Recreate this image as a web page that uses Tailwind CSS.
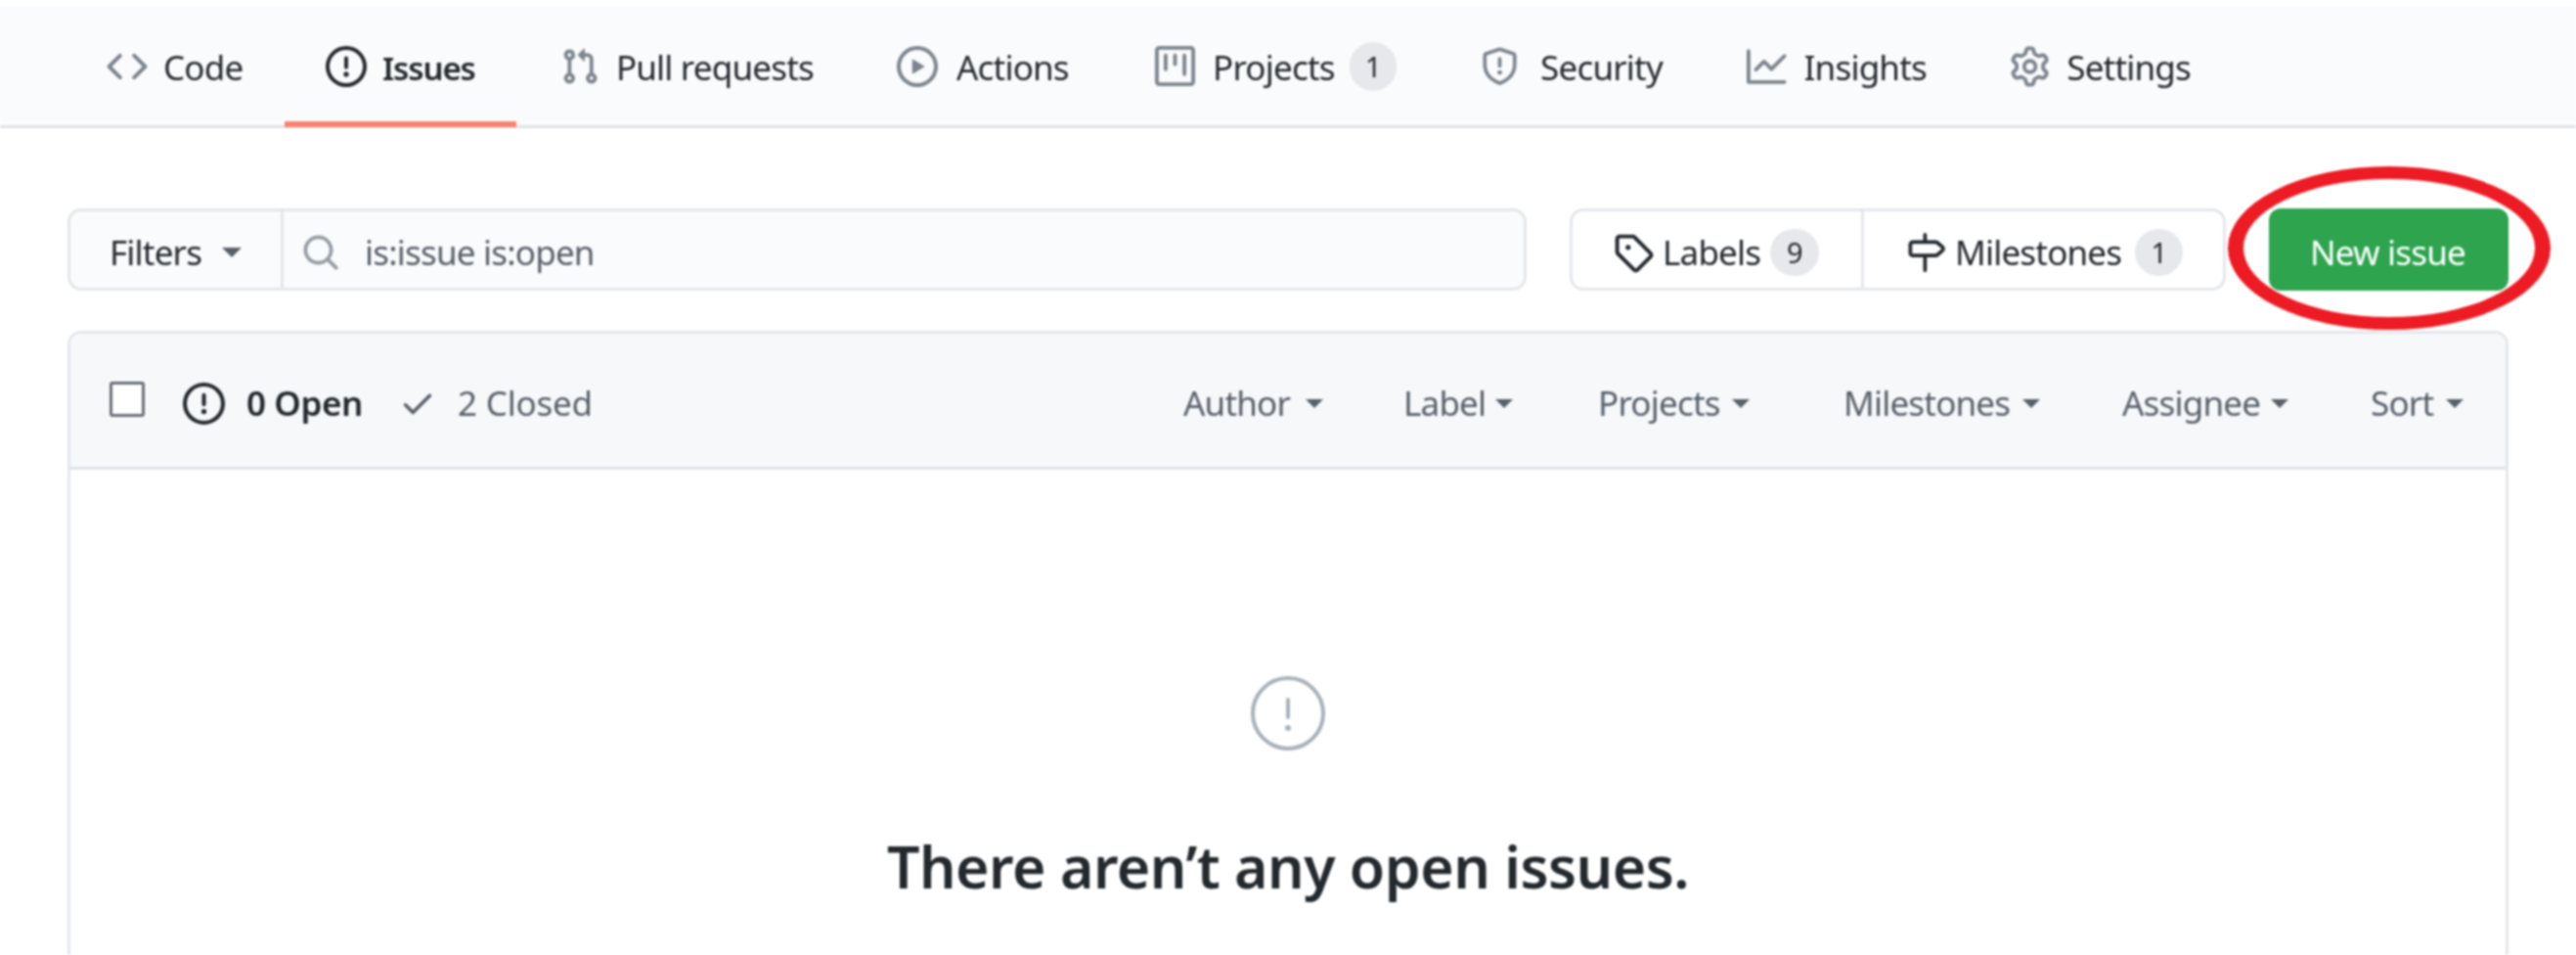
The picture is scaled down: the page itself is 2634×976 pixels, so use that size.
<!DOCTYPE html>
<html lang="en">
<head>
  <meta charset="UTF-8" />
  <title>Issues</title>
  <script src="https://cdn.jsdelivr.net/npm/@tailwindcss/browser@4"></script>
</head>
<body class="bg-white [font-family:'Noto_Sans',sans-serif]">
<div class="relative w-[2634px] h-[976px] overflow-hidden pt-[7px] blur-[1px]">

  <!-- Repo tabs -->
  <nav class="h-[124px] bg-[#fafbfc] border-b-[3px] border-[#dfe2e7] flex items-center pl-[109px] text-[35px] text-[#24292e] tracking-[-0.8px]">
    <a class="flex items-center w-[140px]">
      <svg class="w-[42px] h-[42px] fill-[#7d858e]" viewBox="0 0 16 16"><path fill-rule="evenodd" d="M4.72 3.22a.75.75 0 011.06 1.06L2.06 8l3.72 3.72a.75.75 0 11-1.06 1.06L.47 8.53a.75.75 0 010-1.06l4.25-4.25zm6.56 0a.75.75 0 10-1.06 1.06L13.94 8l-3.72 3.72a.75.75 0 101.06 1.06l4.25-4.25a.75.75 0 000-1.06l-4.25-4.25z"/></svg>
      <span class="ml-[16px] mt-[4px]">Code</span>
    </a>
    <a class="flex items-center w-[237px] ml-[42px] h-[124px] pl-[42px] border-b-[6px] border-[#f9826c] pt-[6px] font-semibold text-[33px] tracking-[-1.1px]">
      <svg class="w-[42px] h-[42px] fill-[#24292e]" viewBox="0 0 16 16"><path fill-rule="evenodd" d="M8 1.5a6.5 6.5 0 100 13 6.5 6.5 0 000-13zM0 8a8 8 0 1116 0A8 8 0 010 8zm9 3a1 1 0 11-2 0 1 1 0 012 0zm-.25-6.25a.75.75 0 00-1.5 0v3.5a.75.75 0 001.5 0v-3.5z"/></svg>
      <span class="ml-[16px] mt-[4px]">Issues</span>
    </a>
    <a class="flex items-center w-[259px] ml-[45px]">
      <svg class="w-[40px] h-[40px] fill-[#7d858e]" viewBox="0 0 16 16"><path fill-rule="evenodd" d="M7.177 3.073L9.573.677A.25.25 0 0110 .854v4.792a.25.25 0 01-.427.177L7.177 3.427a.25.25 0 010-.354zM3.75 2.5a.75.75 0 100 1.5.75.75 0 000-1.5zm-2.25.75a2.25 2.25 0 113 2.122v5.256a2.251 2.251 0 11-1.5 0V5.372A2.25 2.25 0 011.5 3.25zM11 2.5h-1V4h1a1 1 0 011 1v5.628a2.251 2.251 0 101.5 0V5A2.5 2.5 0 0011 2.5zm1 10.25a.75.75 0 111.5 0 .75.75 0 01-1.5 0zM3.75 12a.75.75 0 100 1.5.75.75 0 000-1.5z"/></svg>
      <span class="ml-[17px] mt-[4px] whitespace-nowrap">Pull requests</span>
    </a>
    <a class="flex items-center w-[177px] ml-[85px]">
      <svg class="w-[42px] h-[42px] fill-[#7d858e]" viewBox="0 0 16 16"><path fill-rule="evenodd" d="M1.5 8a6.5 6.5 0 1113 0 6.5 6.5 0 01-13 0zM8 0a8 8 0 100 16A8 8 0 008 0zM6.379 5.227A.25.25 0 006 5.442v5.117a.25.25 0 00.379.214l4.264-2.559a.25.25 0 000-.428L6.379 5.227z"/></svg>
      <span class="ml-[19px] mt-[4px]">Actions</span>
    </a>
    <a class="flex items-center w-[247px] ml-[87px]">
      <svg class="w-[41px] h-[41px] fill-[#7d858e]" viewBox="0 0 16 16"><path fill-rule="evenodd" d="M1.75 0A1.75 1.75 0 000 1.75v12.5C0 15.216.784 16 1.75 16h12.5A1.75 1.75 0 0016 14.25V1.75A1.75 1.75 0 0014.25 0H1.75zM1.5 1.75a.25.25 0 01.25-.25h12.5a.25.25 0 01.25.25v12.5a.25.25 0 01-.25.25H1.75a.25.25 0 01-.25-.25V1.75zM11.75 3a.75.75 0 00-.75.75v7.5a.75.75 0 001.5 0v-7.5a.75.75 0 00-.75-.75zm-8.25.75a.75.75 0 011.5 0v5.5a.75.75 0 01-1.5 0v-5.5zM8 3a.75.75 0 00-.75.75v3.5a.75.75 0 001.5 0v-3.5A.75.75 0 008 3z"/></svg>
      <span class="ml-[18px] mt-[4px] w-[123px]">Projects</span>
      <span class="ml-[17px] w-[48px] h-[50px] rounded-full bg-[#e6e8eb] flex items-center justify-center text-[29px]">1</span>
    </a>
    <a class="flex items-center w-[186px] ml-[86px]">
      <svg class="w-[40px] h-[42px] fill-[#7d858e]" viewBox="0 0 16 16"><path fill-rule="evenodd" d="M7.467.133a1.75 1.75 0 011.066 0l5.25 1.68A1.75 1.75 0 0115 3.48V7c0 1.566-.32 3.182-1.303 4.682-.983 1.498-2.585 2.813-5.032 3.855a1.7 1.7 0 01-1.33 0c-2.447-1.042-4.049-2.357-5.032-3.855C1.32 10.182 1 8.566 1 7V3.48a1.75 1.75 0 011.217-1.667l5.25-1.68zm.61 1.429a.25.25 0 00-.153 0l-5.25 1.68a.25.25 0 00-.174.238V7c0 1.358.275 2.666 1.057 3.86.784 1.194 2.121 2.34 4.366 3.297a.2.2 0 00.154 0c2.245-.956 3.582-2.104 4.366-3.298C13.225 9.666 13.5 8.36 13.5 7V3.48a.25.25 0 00-.174-.237l-5.25-1.68zM9 10.5a1 1 0 11-2 0 1 1 0 012 0zm-.25-5.75a.75.75 0 10-1.5 0v3a.75.75 0 001.5 0v-3z"/></svg>
      <span class="ml-[22px] mt-[4px]">Security</span>
    </a>
    <a class="flex items-center w-[184px] ml-[86px]">
      <svg class="w-[42px] h-[42px] fill-[#7d858e]" viewBox="0 0 16 16"><path fill-rule="evenodd" d="M1.5 1.75a.75.75 0 00-1.5 0v12.5c0 .414.336.75.75.75h14.5a.75.75 0 000-1.5H1.5V1.75zm14.28 2.53a.75.75 0 00-1.06-1.06L10 7.94 7.53 5.47a.75.75 0 00-1.06 0L3.22 8.72a.75.75 0 001.06 1.06L7 7.06l2.47 2.47a.75.75 0 001.06 0l5.25-5.25z"/></svg>
      <span class="ml-[18px] mt-[4px]">Insights</span>
    </a>
    <a class="flex items-center w-[185px] ml-[85px]">
      <svg class="w-[42px] h-[42px] fill-[#7d858e]" viewBox="0 0 16 16"><path fill-rule="evenodd" d="M7.429 1.525a6.593 6.593 0 011.142 0c.036.003.108.036.137.146l.289 1.105c.147.56.55.967.997 1.189.174.086.341.183.501.29.417.278.97.423 1.53.27l1.102-.303c.11-.03.175.016.195.046.219.31.41.641.573.989.014.031.022.11-.059.19l-.815.806c-.411.406-.562.957-.53 1.456a4.588 4.588 0 010 .582c-.032.499.119 1.05.53 1.456l.815.806c.08.08.073.159.059.19a6.494 6.494 0 01-.573.99c-.02.029-.086.074-.195.045l-1.103-.303c-.559-.153-1.112-.008-1.529.27-.16.107-.327.204-.5.29-.449.222-.851.628-.998 1.189l-.289 1.105c-.029.11-.101.143-.137.146a6.613 6.613 0 01-1.142 0c-.036-.003-.108-.037-.137-.146l-.289-1.105c-.147-.56-.55-.967-.997-1.189a4.502 4.502 0 01-.501-.29c-.417-.278-.97-.423-1.53-.27l-1.102.303c-.11.03-.175-.016-.195-.046a6.492 6.492 0 01-.573-.989c-.014-.031-.022-.11.059-.19l.815-.806c.411-.406.562-.957.53-1.456a4.587 4.587 0 010-.582c.032-.499-.119-1.05-.53-1.456l-.815-.806c-.08-.08-.073-.159-.059-.19a6.44 6.44 0 01.573-.99c.02-.029.086-.075.195-.045l1.103.303c.559.153 1.112.008 1.529-.27.16-.107.327-.204.5-.29.449-.222.851-.628.998-1.189l.289-1.105c.029-.11.101-.143.137-.146zM8 0c-.236 0-.47.01-.701.03-.743.065-1.29.615-1.458 1.261l-.29 1.106c-.017.066-.078.158-.211.224a5.994 5.994 0 00-.668.386c-.123.082-.233.09-.3.071L3.27 2.776c-.644-.177-1.392.02-1.82.63a7.977 7.977 0 00-.704 1.217c-.315.675-.111 1.422.363 1.891l.815.806c.05.048.098.147.088.294a6.084 6.084 0 000 .772c.01.147-.038.246-.088.294l-.815.806c-.474.469-.678 1.216-.363 1.891.2.428.436.835.704 1.218.428.609 1.176.806 1.82.63l1.103-.303c.066-.019.176-.011.299.071.213.143.436.272.668.386.133.066.194.158.212.224l.289 1.106c.169.646.715 1.196 1.458 1.26a8.094 8.094 0 001.402 0c.743-.064 1.29-.614 1.458-1.26l.29-1.106c.017-.066.078-.158.211-.224a5.98 5.98 0 00.668-.386c.123-.082.233-.09.3-.071l1.102.302c.644.177 1.392-.02 1.82-.63.268-.382.505-.789.704-1.217.315-.675.111-1.422-.364-1.891l-.814-.806c-.05-.048-.098-.147-.088-.294a6.1 6.1 0 000-.772c-.01-.147.039-.246.088-.294l.814-.806c.475-.469.679-1.216.364-1.891a7.992 7.992 0 00-.704-1.218c-.428-.609-1.176-.806-1.82-.63l-1.103.303c-.066.019-.176.011-.299-.071a5.991 5.991 0 00-.668-.386c-.133-.066-.194-.158-.212-.224L10.16 1.29C9.99.645 9.444.095 8.701.031A8.094 8.094 0 008 0zm1.5 8a1.5 1.5 0 11-3 0 1.5 1.5 0 013 0zM11 8a3 3 0 11-6 0 3 3 0 016 0z"/></svg>
      <span class="ml-[17px] mt-[4px]">Settings</span>
    </a>
  </nav>

  <div class="ml-[69px] w-[2496px]">
    <!-- Filter row -->
    <div class="flex h-[84px] mt-[82px] text-[35px] tracking-[-0.8px]">
      <div class="flex w-[1492px] border-[3px] border-[#e4e7ea] rounded-[14px] overflow-hidden bg-[#fafbfc]">
        <div class="w-[218px] flex items-center pl-[40px] pt-[6px] border-r-[3px] border-[#e4e7ea] text-[#24292e]">
          <span class="w-[92px]">Filters</span>
          <span class="ml-[23px] border-x-[10px] border-t-[10px] border-x-transparent border-t-[#586069]"></span>
        </div>
        <div class="flex-1 flex items-center pl-[18px] pt-[6px] text-[#586069]">
          <svg class="w-[40px] h-[40px] fill-[#959da5]" viewBox="0 0 16 16"><path fill-rule="evenodd" d="M11.5 7a4.499 4.499 0 11-8.998 0A4.499 4.499 0 0111.5 7zm-.82 4.74a6 6 0 111.06-1.06l3.04 3.04a.75.75 0 11-1.06 1.06l-3.04-3.04z"/></svg>
          <span class="ml-[25px]">is:issue is:open</span>
        </div>
      </div>
      <div class="flex w-[671px] ml-[44px] border-[3px] border-[#e4e7ea] rounded-[14px] text-[#24292e]">
        <div class="w-[298px] flex items-center pl-[41px] pt-[6px] border-r-[3px] border-[#e4e7ea]">
          <svg class="w-[42px] h-[42px] fill-[#24292e]" viewBox="0 0 16 16"><path fill-rule="evenodd" d="M2.5 7.775V2.75a.25.25 0 01.25-.25h5.025a.25.25 0 01.177.073l6.25 6.25a.25.25 0 010 .354l-5.025 5.025a.25.25 0 01-.354 0l-6.25-6.25a.25.25 0 01-.073-.177zm-1.5 0V2.75C1 1.784 1.784 1 2.75 1h5.025c.464 0 .91.184 1.238.513l6.25 6.25a1.75 1.75 0 010 2.474l-5.026 5.026a1.75 1.75 0 01-2.474 0l-6.25-6.25A1.75 1.75 0 011 7.775zM6 5a1 1 0 100 2 1 1 0 000-2z"/></svg>
          <span class="ml-[9px] w-[98px]">Labels</span>
          <span class="ml-[12px] w-[50px] h-[48px] rounded-full bg-[#e6e8eb] flex items-center justify-center text-[29px]">9</span>
        </div>
        <div class="flex-1 flex items-center pl-[43px] pt-[6px]">
          <svg class="w-[40px] h-[42px] fill-[#24292e]" viewBox="0 0 16 16"><path fill-rule="evenodd" d="M7.75 0a.75.75 0 01.75.75V3h3.634c.414 0 .814.147 1.13.414l2.07 1.75a1.75 1.75 0 010 2.672l-2.07 1.75a1.75 1.75 0 01-1.13.414H8.5v5.25a.75.75 0 11-1.5 0V10H2.75A1.75 1.75 0 011 8.25v-3.5C1 3.784 1.784 3 2.75 3H7V.75A.75.75 0 017.75 0zm0 8.5h4.384a.25.25 0 00.161-.06l2.07-1.75a.25.25 0 000-.38l-2.07-1.75a.25.25 0 00-.161-.06H2.75a.25.25 0 00-.25.25v3.5c0 .138.112.25.25.25h5z"/></svg>
          <span class="ml-[10px] w-[172px]">Milestones</span>
          <span class="ml-[12px] w-[49px] h-[48px] rounded-full bg-[#e6e8eb] flex items-center justify-center text-[29px]">1</span>
        </div>
      </div>
      <button class="w-[245px] ml-[44px] pt-[6px] pr-[2px] rounded-[12px] bg-[#2ea44f] text-white flex items-center justify-center">New issue</button>
    </div>

    <!-- Issue list -->
    <div class="mt-[41px] h-[700px] border-[3px] border-[#e4e7ea] rounded-t-[14px]">
      <div class="h-[139px] pt-[6px] bg-[#f6f8fa] border-b-[3px] border-[#dfe2e7] rounded-t-[12px] flex items-center pl-[40px] pr-[43px] text-[35px] tracking-[-0.8px] text-[#586069]">
        <span class="w-[36px] h-[36px] border-[3px] border-[#6a6f75] rounded-[3px] bg-white -mt-[8px]"></span>
        <svg class="ml-[39px] w-[43px] h-[43px] fill-[#24292e]" viewBox="0 0 16 16"><path fill-rule="evenodd" d="M8 1.5a6.5 6.5 0 100 13 6.5 6.5 0 000-13zM0 8a8 8 0 1116 0A8 8 0 010 8zm9 3a1 1 0 11-2 0 1 1 0 012 0zm-.25-6.25a.75.75 0 00-1.5 0v3.5a.75.75 0 001.5 0v-3.5z"/></svg>
        <span class="ml-[22px] w-[119px] font-semibold text-[#24292e] tracking-[-0.4px] whitespace-nowrap">0 Open</span>
        <svg class="ml-[37px] w-[38px] h-[38px] fill-[#586069]" viewBox="0 0 16 16"><path fill-rule="evenodd" d="M13.78 4.22a.75.75 0 010 1.06l-7.25 7.25a.75.75 0 01-1.06 0L2.22 9.28a.75.75 0 011.06-1.06L6 10.94l6.72-6.72a.75.75 0 011.06 0z"/></svg>
        <span class="ml-[22px] tracking-[-0.2px]">2 Closed</span>
        <div class="ml-auto flex items-center">
          <span class="w-[116px] ml-[1px]">Author</span>
          <span class="ml-[9px] border-x-[9px] border-t-[9px] border-x-transparent border-t-[#586069]"></span>
          <span class="ml-[82px] w-[84px]">Label</span>
          <span class="ml-[10px] border-x-[9px] border-t-[9px] border-x-transparent border-t-[#586069]"></span>
          <span class="ml-[87px] w-[124px]">Projects</span>
          <span class="ml-[13px] border-x-[9px] border-t-[9px] border-x-transparent border-t-[#586069]"></span>
          <span class="ml-[96px] w-[169px]">Milestones</span>
          <span class="ml-[14px] border-x-[9px] border-t-[9px] border-x-transparent border-t-[#586069]"></span>
          <span class="ml-[84px] w-[140px]">Assignee</span>
          <span class="ml-[12px] border-x-[9px] border-t-[9px] border-x-transparent border-t-[#586069]"></span>
          <span class="ml-[84px] w-[65px]">Sort</span>
          <span class="ml-[12px] border-x-[9px] border-t-[9px] border-x-transparent border-t-[#586069]"></span>
        </div>
      </div>
      <div class="flex flex-col items-center pt-[211px]">
        <svg class="w-[76px] h-[76px]" viewBox="0 0 76 76">
          <circle cx="38" cy="38" r="36" fill="none" stroke="#a9b1ba" stroke-width="4"/>
          <rect x="36" y="22" width="4" height="22" rx="2" fill="#a9b1ba"/>
          <circle cx="38" cy="53" r="3" fill="#a9b1ba"/>
        </svg>
        <h2 class="mt-[78px] text-[59px] leading-[80px] font-semibold text-[#24292e] tracking-[-0.5px]">There aren’t any open issues.</h2>
      </div>
    </div>
  </div>

  <!-- Red marker ring round the button -->
  <div class="absolute left-[2278px] top-[170px] w-[330px] h-[167px] rounded-[50%] border-x-[16px] border-y-[13px] border-[#ed1c24]"></div>
</div>
</body>
</html>
